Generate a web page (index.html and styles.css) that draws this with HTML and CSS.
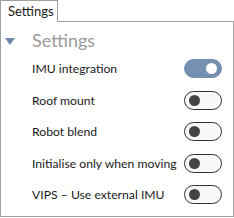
FILE: index.html
```html
<!DOCTYPE html>
<html lang="en">
<head>
    <meta charset="UTF-8">
    <title>Settings</title>
    <link rel="stylesheet" href="styles.css">
</head>
<body>

    <div class="tabs">
        <div class="tab">Settings</div>
    </div>

    <div class="panel">
        <div class="section-header">
            <span class="caret"></span>
            <h1>Settings</h1>
        </div>

        <div class="row">
            <span class="label">IMU integration</span>
            <span class="toggle on"><span class="knob"></span></span>
        </div>
        <div class="row">
            <span class="label">Roof mount</span>
            <span class="toggle"><span class="knob"></span></span>
        </div>
        <div class="row">
            <span class="label">Robot blend</span>
            <span class="toggle"><span class="knob"></span></span>
        </div>
        <div class="row">
            <span class="label">Initialise only when moving</span>
            <span class="toggle"><span class="knob"></span></span>
        </div>
        <div class="row">
            <span class="label">VIPS – Use external IMU</span>
            <span class="toggle"><span class="knob"></span></span>
        </div>
    </div>

</body>
</html>
```

FILE: styles.css
```css
* {
    margin: 0;
    padding: 0;
    box-sizing: border-box;
}

body {
    font-family: 'Lato', sans-serif;
    font-size: 12px;
    color: #1a1a1a;
    background-color: #ffffff;
    width: 234px;
    height: 218px;
}

.tabs {
    display: flex;
    height: 21px;
}

.tab {
    border: 1px solid #a0a0a0;
    border-bottom: none;
    padding: 2px 7px 0 7px;
    height: 22px;
    width: 58px;
    background-color: #ffffff;
    position: relative;
    z-index: 1;
    font-size: 13px;
    line-height: 16px;
}

.panel {
    border: 1px solid #a0a0a0;
    width: 234px;
    height: 196px;
    padding: 5px 0 0 0;
}

.section-header {
    display: flex;
    align-items: center;
    height: 26px;
}

.caret {
    width: 0;
    height: 0;
    border-left: 5px solid transparent;
    border-right: 5px solid transparent;
    border-top: 7px solid #6f89aa;
    margin: 2px 17px 0 4px;
}

h1 {
    font-size: 18px;
    font-weight: normal;
    color: #9a9a9a;
    line-height: 24px;
}

.row {
    display: flex;
    align-items: center;
    justify-content: space-between;
    height: 31.5px;
    padding: 0 11px 0 31px;
}

.label {
    white-space: nowrap;
    font-size: 12.2px;
}

.toggle {
    width: 38px;
    height: 19px;
    border-radius: 10px;
    border: 1px solid #333333;
    background-color: #f8f8f8;
    display: flex;
    align-items: center;
    padding: 0 4px;
}

.knob {
    width: 11px;
    height: 11px;
    border-radius: 50%;
    background-color: #444444;
}

.toggle.on {
    background-color: #7690b2;
    border-color: #7690b2;
    justify-content: flex-end;
}

.toggle.on .knob {
    background-color: #ffffff;
}
```
